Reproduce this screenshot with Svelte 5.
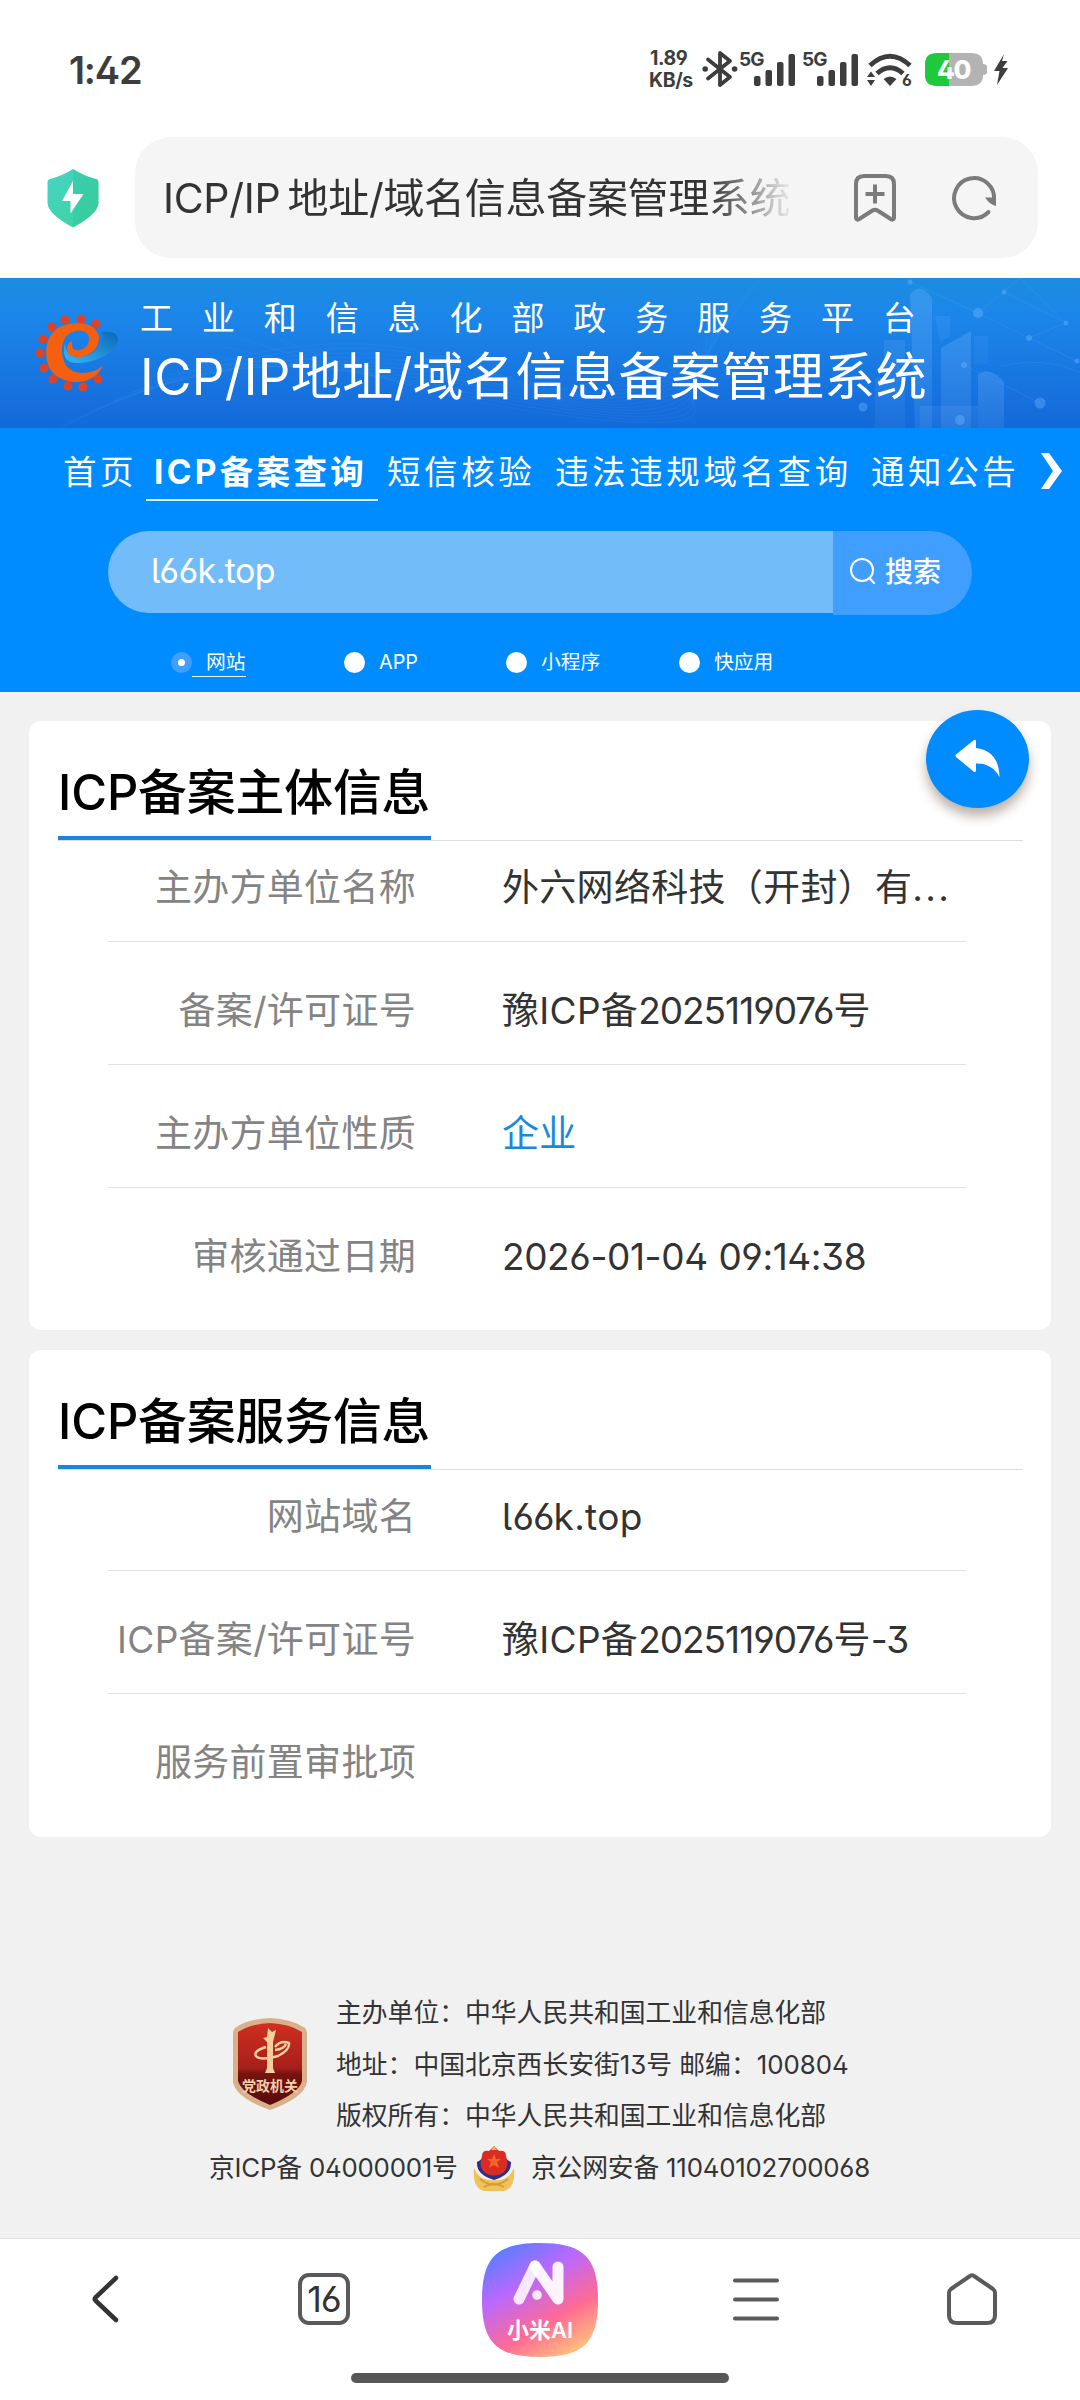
<script>
  const navItems = ['首页', 'ICP备案查询', '短信核验', '违法违规域名查询', '通知公告'];
  const activeNav = 1;

  const types = ['网站', 'APP', '小程序', '快应用'];
  const activeType = 0;

  const cards = [
    {
      title: 'ICP备案主体信息',
      rows: [
        { label: '主办方单位名称', value: '外六网络科技（开封）有...' },
        { label: '备案/许可证号', value: '豫ICP备2025119076号' },
        { label: '主办方单位性质', value: '企业', link: true },
        { label: '审核通过日期', value: '2026-01-04 09:14:38', date: true },
      ],
    },
    {
      title: 'ICP备案服务信息',
      rows: [
        { label: '网站域名', value: 'l66k.top' },
        { label: 'ICP备案/许可证号', value: '豫ICP备2025119076号-3' },
        { label: '服务前置审批项', value: '' },
      ],
    },
  ];

  const signals = [1, 2];
  const teeth = [
    [60, 9], [45, 4], [29, 5], [16, 12], [7, 24], [4, 38],
    [8, 53], [17, 64], [32, 71], [47, 72], [62, 64],
  ];
  const waves = Array.from({ length: 12 }, (_, i) => i * 9);

  // digits are set tighter than letters, so runs are split
  const runs = (text) => text.match(/\.{3}|[\d:-]+|[A-Za-z/.]+|[^\dA-Za-z/.:-]+/g) ?? [];
  const isDigits = (s) => /^[\d:-]+$/.test(s);
</script>

{#snippet mixed(text)}{#each runs(text) as run}<span class:digits={isDigits(run)} class:dots={run === '...'}>{run}</span>{/each}{/snippet}

<div class="screen">
  <div class="status">
    <span class="clock">1:42</span>
    <div class="speed"><span>1.89</span><span>KB/s</span></div>
    <svg class="bt" width="36" height="38" viewBox="0 0 36 38">
      <path d="M6 9.5 L28 27 L18 35 V3 L28 11 L6 28.5" fill="none" stroke="#3d3d3d" stroke-width="3.8" stroke-linejoin="round" stroke-linecap="round" />
      <circle cx="3.2" cy="19" r="2.8" fill="#3d3d3d" /><circle cx="32.6" cy="19" r="2.8" fill="#3d3d3d" />
    </svg>
    {#each signals as s (s)}
      <svg class="signal" width="58" height="38" viewBox="0 0 58 38">
        <text x="-1" y="15.500" class="five-g">5G</text>
        <g fill="#3d3d3d">
          <rect x="14" y="26" width="6.5" height="10" rx="2" />
          <rect x="25.5" y="20" width="6.5" height="16" rx="2" />
          <rect x="37" y="12" width="6.5" height="24" rx="2" />
          <rect x="48.5" y="4" width="6.5" height="32" rx="2" />
        </g>
      </svg>
    {/each}
    <svg class="wifi" width="46" height="38" viewBox="0 0 46 38">
      <g fill="none" stroke="#3d3d3d" stroke-width="5">
        <path d="M3 15.5 Q23 -3 43 15.5" />
        <path d="M10 23.5 Q23 12 36 23.5" />
      </g>
      <path d="M16.5 29 Q23 24 29.5 29 L23 36 Z" fill="#3d3d3d" />
      <path d="M0 27 L4 21.5 L8 27 Z M0 30 L4 36 L8 30 Z" fill="#3d3d3d" />
      <text x="35" y="36" class="six">6</text>
    </svg>
    <svg class="battery" width="62" height="34" viewBox="0 0 62 34">
      <path d="M12 0 H24 V33 H12 Q0 33 0 22 V11 Q0 0 12 0 Z" fill="#1fc93c" />
      <path d="M24 0 H46 Q58 0 58 11 V22 Q58 33 46 33 H24 Z" fill="#b3b3b3" />
      <path d="M58 11 Q62 11 62 14 V19 Q62 22 58 22 Z" fill="#b3b3b3" />
      <text x="28.5" y="26" text-anchor="middle" class="level">40</text>
    </svg>
    <svg class="bolt" width="16" height="32" viewBox="0 0 16 32">
      <path d="M11 0 L1 17 H6.5 L4 31 L15 14 H9.5 L14.5 7 H9 Z" fill="#3d3d3d" />
    </svg>
  </div>

  <div class="address">
    <svg class="shield" width="52" height="59" viewBox="0 0 52 59">
      <defs>
        <linearGradient id="mint" x1="0" y1="0" x2="1" y2="1">
          <stop offset="0" stop-color="#48d2c6" /><stop offset="1" stop-color="#3bd59a" />
        </linearGradient>
      </defs>
      <path d="M26 0 Q37 7 49 10 Q51.500 10.500 51.500 13 V34 Q51 45 26 58.500 Q1 45 .5 34 V13 Q.5 10.500 3 10 Q15 7 26 0 Z" fill="url(#mint)" />
      <path d="M26 0 Q37 7 49 10 Q51.500 10.500 51.500 13 V34 Q51 45 26 58.500 Z" fill="#20b890" opacity=".22" />
      <path d="M26 12 L15 32 H23.500 V44.500 L36.500 25 H26 Z" fill="#fff" />
    </svg>
    <div class="url-box">
      <div class="url-text">ICP/IP 地址/域名信息备案管理系统</div>
      <svg class="bookmark" width="42" height="48" viewBox="0 0 42 48" fill="none" stroke="#7b7b7b" stroke-width="4">
        <path d="M2 10 Q2 2 10 2 H32 Q40 2 40 10 V44 Q39 47 36 44.500 L23.500 36.500 Q21 35 18.500 36.500 L6 44.500 Q3 47 2 44 Z" stroke-linejoin="round" />
        <path d="M21 10.500 V29.500 M11.500 20 H30.500" />
      </svg>
      <svg class="reload" width="46" height="46" viewBox="0 0 46 46">
        <path d="M36.500 37 A20 20 0 1 1 42 25" fill="none" stroke="#7b7b7b" stroke-width="4" stroke-linecap="round" />
        <path d="M33 22.500 H44 V31 Q38 30 33 22.500 Z" fill="#7b7b7b" />
      </svg>
    </div>
  </div>

  <header class="banner">
    <svg class="scene" width="1080" height="150" viewBox="0 0 1080 150">
      <defs>
        <linearGradient id="tower" x1="0" y1="0" x2="0" y2="1">
          <stop offset="0" stop-color="#8fc8ff" stop-opacity=".22" /><stop offset="1" stop-color="#8fc8ff" stop-opacity=".12" />
        </linearGradient>
      </defs>
      <g fill="none" stroke="#5db4ff" stroke-opacity=".1">
        {#each waves as w (w)}
          <path d="M{60 + w * 2} {150 - w} Q{300 + w} {20 + w} {480 + w} {90 + w / 2} T{760 - w} {w}" />
        {/each}
      </g>
      <g fill="url(#tower)">
        <path d="M910 16 Q921 4 932 20 V150 H915 Z" />
        <path d="M941 70 L971 53 V150 H941 Z" />
        <path d="M978 96 Q990 88 1004 104 V150 H978 Z" />
        <path d="M884 62 H905 V150 H875 V100 H884 Z" opacity=".6" />
        <path d="M935 38 H950 V58 L940 64 Z M974 58 H988 V86 H974 Z" opacity=".5" />
        <path d="M920 128 H978 V150 H920 Z" opacity=".5" />
      </g>
      <g fill="#7fc4ff" fill-opacity=".32">
        <circle cx="978" cy="35" r="5" /><circle cx="1040" cy="125" r="5.500" /><circle cx="863" cy="129" r="4.500" />
        <circle cx="1029" cy="60" r="3" /><circle cx="1066" cy="45" r="2.500" /><circle cx="1004" cy="14" r="2.500" />
        <circle cx="910" cy="4" r="2.500" /><circle cx="964" cy="87" r="3" /><circle cx="960" cy="142" r="5" /><circle cx="1077" cy="83" r="2.500" />
      </g>
      <g fill="none" stroke="#7fc4ff" stroke-opacity=".13">
        <path d="M910 4 L978 35 L1029 60 L1066 45 L1020 0 L978 35 M1029 60 L1077 83 M964 87 L1040 125 M1004 14 L1066 45" />
        <path d="M1000 88 Q1045 78 1080 94" />
      </g>
    </svg>
    <svg class="logo" width="84" height="78" viewBox="0 0 84 78">
      <defs>
        <linearGradient id="swoosh" x1="0" y1="1" x2="1" y2="0">
          <stop offset="0" stop-color="#38b6f5" /><stop offset="1" stop-color="#0b66b8" />
        </linearGradient>
      </defs>
      {#each teeth as [x, y]}
        <circle cx={x} cy={y} r="4.500" fill="#dd4326" />
      {/each}
      <path d="M65 17 Q81 15 82 24 Q81 36 62 44 Q46 50 34 47 Q25 42 29 28 Q30 41 42 42 Q60 41 66 26 Q68 20 65 17 Z" fill="url(#swoosh)" />
      <path d="M67 51 Q58 68 38 67 Q10 64 10 37 Q11 10 40 8 Q60 8 63 22 Q63 38 45 42 Q32 43 31 34 Q31 28 36 26 Q35 37 44 35 Q54 32 53 22 Q50 14 39 16 Q25 20 26 38 Q28 57 46 58 Q58 58 67 51 Z" fill="#f4600f" />
    </svg>
    <div class="titles">
      <div class="org">工业和信息化部政务服务平台</div>
      <div class="system">ICP/IP地址/域名信息备案管理系统</div>
    </div>
  </header>

  <section class="search-area">
    <nav>
      {#each navItems as item, i (item)}
        <div class="nav-item" class:active={i === activeNav}><span>{item}</span></div>
      {/each}
      <svg class="more" width="22" height="36" viewBox="0 0 22 36">
        <path d="M0 0 H8 L21 18 L8 36 H0 L12 18 Z" fill="#fff" />
      </svg>
    </nav>
    <div class="search">
      <div class="field">l66k.top</div>
      <div class="go">
        <svg width="28" height="28" viewBox="0 0 28 28" fill="none" stroke="#fff" stroke-width="2">
          <circle cx="13" cy="13" r="11" /><path d="M20.500 21 L25 26" stroke-linecap="round" />
        </svg>
        <span>搜索</span>
      </div>
    </div>
    <div class="types">
      {#each types as type, i (type)}
        <div class="type" class:on={i === activeType}><i></i><span>{type}</span></div>
      {/each}
    </div>
  </section>

  <main>
    <div class="back">
      <svg width="46" height="40" viewBox="0 0 46 40">
        <path d="M19 1 Q21 0 21 3 V9 Q44 12 44.500 38 Q37 24 21 24.500 V31 Q21 34 18.500 32.500 L1 18 Q0 16.500 1 15.500 Z" fill="#fff" />
      </svg>
    </div>
    {#each cards as card (card.title)}
      <section class="card">
        <div class="head"><h2>{card.title}</h2></div>
        <div class="rows">
          {#each card.rows as row (row.label)}
            <div class="row">
              <span class="label">{row.label}</span>
              <span class="value" class:link={row.link} class:date={row.date}>{@render mixed(row.value)}</span>
            </div>
          {/each}
        </div>
      </section>
    {/each}
  </main>

  <footer>
    <div class="owner">
      <svg class="party" width="76" height="92" viewBox="0 0 76 92">
        <defs>
          <linearGradient id="crest" x1="0" y1="0" x2="0" y2="1">
            <stop offset="0" stop-color="#d02f20" /><stop offset=".55" stop-color="#a51f1a" /><stop offset=".62" stop-color="#76130f" /><stop offset="1" stop-color="#560b0b" />
          </linearGradient>
        </defs>
        <path d="M38 0 Q60 1 73 10 Q75 12 75 15 V64 Q72 80 38 92 Q4 80 1 64 V15 Q1 12 3 10 Q16 1 38 0 Z" fill="#d9b08a" />
        <path d="M38 5 Q58 6 70 14 V63 Q67 75 38 87 Q9 75 6 63 V14 Q18 6 38 5 Z" fill="url(#crest)" />
        <path d="M36 10 L40 14 L44 12 L42 20 L41 24 V50 L43 55 H33 L35 50 V24 L31 20 L35 19 Z" fill="#f3cf9c" />
        <path d="M34 29 Q21 33 24 38 Q28 43 46 38 Q58 32 57 25 Q49 22 43 29 M43 32 Q52 31 54 26" fill="none" stroke="#f3cf9c" stroke-width="2.500" />
        <text x="38" y="73" text-anchor="middle" class="party-text">党政机关</text>
      </svg>
      <div class="lines">
        <div>主办单位：中华人民共和国工业和信息化部</div>
        <div>地址：中国北京西长安街13号 邮编：100804</div>
        <div>版权所有：中华人民共和国工业和信息化部</div>
      </div>
    </div>
    <div class="records">
      <span class="icp">京ICP备 04000001号</span>
      <svg width="44" height="46" viewBox="0 0 44 46">
        <path d="M2 22 Q0 42 12 45 H32 Q44 42 42 22 Q36 36 22 34 Q8 36 2 22 Z" fill="#f0c25c" />
        <path d="M8 33 Q22 44 36 33 M12 41 Q22 35 32 41" fill="none" stroke="#d99a35" stroke-width="2" />
        <path d="M5 16 Q10 14 13 8 H31 Q34 14 39 16 Q40 29 22 34 Q4 29 5 16 Z" fill="#2d2f86" />
        <path d="M22 0 L27 5 Q34 4 34 10 Q38 21 31 27 Q22 32 13 27 Q6 21 10 10 Q10 4 17 5 Z" fill="#d92c22" />
        <path d="M22 8 L24 13 H29 L25 16 L27 22 L22 19 L17 22 L19 16 L15 13 H20 Z" fill="#f4652c" />
        <path d="M19 4 L22 0 L25 4 Z" fill="#f0b04c" />
      </svg>
      <span class="police">京公网安备 11040102700068</span>
    </div>
  </footer>

  <div class="toolbar">
    <svg width="52" height="52" viewBox="0 0 52 52" fill="none" stroke="#333" stroke-width="4.500" stroke-linecap="round" stroke-linejoin="round">
      <path d="M34 5 L13.500 24.500 Q12 26 13.500 27.500 L34 47" />
    </svg>
    <div class="tabs">16</div>
    <svg class="ai" width="118" height="116" viewBox="0 0 118 116">
      <defs>
        <linearGradient id="glow" x1=".15" y1="0" x2=".75" y2="1">
          <stop offset="0" stop-color="#4f80ff" /><stop offset=".35" stop-color="#b869ff" /><stop offset=".7" stop-color="#ff6a94" /><stop offset="1" stop-color="#ffc37c" />
        </linearGradient>
      </defs>
      <path d="M59 1 C103 1 117 16 117 58 C117 100 103 115 59 115 C15 115 1 100 1 58 C1 16 15 1 59 1 Z" fill="url(#glow)" />
      <g fill="none" stroke="#fff" stroke-width="11" stroke-linecap="round" stroke-linejoin="round">
        <path d="M38 57 L54 24" stroke-opacity=".85" />
        <path d="M54 24 L77 57 V25" stroke-opacity=".93" />
      </g>
      <circle cx="56" cy="53" r="4.800" fill="#fff" opacity=".85" />
      <text x="59" y="96" text-anchor="middle" class="ai-text">小米AI</text>
    </svg>
    <svg width="52" height="52" viewBox="0 0 52 52" fill="none" stroke="#5a5a5a" stroke-width="4" stroke-linecap="round">
      <path d="M5 7.500 H47 M5 26.500 H47 M5 45.500 H47" />
    </svg>
    <svg width="52" height="54" viewBox="0 0 52 54" fill="none" stroke="#5a5a5a" stroke-width="4" stroke-linejoin="round">
      <path d="M24 4 Q26 2.500 28 4 L47 17 Q49 18.500 49 21 V43 Q49 51 41 51 H11 Q3 51 3 43 V21 Q3 18.500 5 17 Z" />
    </svg>
  </div>
  <div class="gesture"><div class="pill"></div></div>
</div>

<style>
  :global(body) {
    background: #f1f1f1;
  }

  .screen {
    display: flex;
    flex-direction: column;
    width: 1080px;
    height: 2400px;
    overflow: hidden;
    background: #f1f1f1;
    color: #333;
    font-family: Inter, "Noto Sans CJK SC", sans-serif;
    font-feature-settings: "ss01", "cv05";
    white-space: nowrap;
  }

  .screen svg {
    display: block;
    flex: none;
    overflow: visible;
  }

  /* status bar */
  .status {
    display: flex;
    align-items: flex-start;
    box-sizing: border-box;
    height: 137px;
    padding: 50px 0 0 69px;
    background: #fff;
    color: #3d3d3d;
  }

  .clock {
    width: 580px;
    font-size: 38px;
    line-height: 41px;
    font-weight: 600;
    letter-spacing: -1.200px;
  }

  .speed {
    display: flex;
    flex-direction: column;
    width: 53px;
    font-size: 19.500px;
    font-weight: 700;
    line-height: 22px;
    margin-top: -3px;
    letter-spacing: -0.4px;
  }

  .speed span:first-child {
    padding-left: 1px;
  }

  .signal {
    margin-left: 2px;
  }

  .signal + .signal {
    margin-left: 5px;
  }

  .five-g {
    font-size: 19px;
    font-weight: 700;
    fill: #3d3d3d;
    letter-spacing: -0.8px;
  }

  .six {
    font-size: 16px;
    font-weight: 700;
    fill: #3d3d3d;
  }

  .wifi {
    margin-left: 6px;
  }

  .battery {
    margin: 3px 0 0 12px;
  }

  .level {
    font-size: 26px;
    font-weight: 800;
    letter-spacing: -1.500px;
    fill: #fff;
  }

  .bolt {
    margin: 4px 0 0 6px;
  }

  /* address bar */
  .address {
    display: flex;
    height: 141px;
    background: #fff;
  }

  .shield {
    margin: 32px 36px 0 47px;
  }

  .url-box {
    display: flex;
    align-items: center;
    box-sizing: border-box;
    width: 903px;
    height: 121px;
    padding-left: 28px;
    border-radius: 36px;
    background: #f5f5f5;
  }

  .url-text {
    width: 628px;
    overflow: hidden;
    font-size: 41px;
    line-height: 60px;
    letter-spacing: -0.300px;
    word-spacing: -4px;
    -webkit-mask-image: linear-gradient(90deg, #000 545px, transparent 632px);
    mask-image: linear-gradient(90deg, #000 545px, transparent 632px);
  }

  .bookmark {
    margin-left: 63px;
  }

  .reload {
    margin-left: 56px;
  }

  /* banner */
  .banner {
    position: relative;
    display: flex;
    height: 150px;
    background: linear-gradient(#1c8ce0, #1b86ea 25%, #1469d9);
    color: #fff;
  }

  .scene {
    position: absolute;
    inset: 0;
  }

  .logo {
    position: relative;
    margin: 37px 0 0 36px;
  }

  .titles {
    position: relative;
    margin-left: 20px;
    padding-top: 18px;
  }

  .org {
    font-size: 33px;
    line-height: 44px;
    letter-spacing: 28.900px;
  }

  .system {
    font-size: 51px;
    line-height: 73px;
    letter-spacing: 0.450px;
  }

  /* query area */
  .search-area {
    height: 264px;
    background: #008cff;
    color: #fff;
  }

  nav {
    display: grid;
    grid-template-columns: 83px 241px 168px 316px 170px 1fr;
    padding-left: 63px;
    height: 103px;
    align-items: start;
  }

  .nav-item {
    box-sizing: border-box;
    height: 73px;
    padding-top: 23px;
    font-size: 33.500px;
    line-height: 42px;
    letter-spacing: 3.600px;
  }

  .nav-item.active {
    width: 232px;
    padding-left: 8px;
    border-bottom: 2px solid #d5f7ff;
    font-weight: 700;
    letter-spacing: 3.300px;
  }

  .more {
    margin-top: 25px;
  }

  .search {
    display: flex;
    width: 864px;
    height: 84px;
    margin-left: 108px;
  }

  .field {
    box-sizing: border-box;
    width: 725px;
    height: 82px;
    padding-left: 43px;
    border-radius: 41px 0 0 41px;
    background: #73bcfa;
    font-size: 34px;
    line-height: 79px;
    letter-spacing: -0.6px;
  }

  .go {
    display: flex;
    align-items: center;
    box-sizing: border-box;
    width: 139px;
    padding-left: 16px;
    gap: 8px;
    border-radius: 0 42px 42px 0;
    background: #409eff;
    font-size: 28px;
    font-weight: 500;
  }

  .go svg {
    margin-top: -4px;
  }

  .go span {
    margin-top: -3px;
    line-height: 40px;
  }

  .types {
    display: grid;
    grid-template-columns: 173px 162px 173px 1fr;
    padding: 33px 0 0 171px;
    font-size: 19.800px;
    line-height: 27px;
  }

  .type {
    display: flex;
    align-items: center;
  }

  .type i {
    box-sizing: border-box;
    width: 21px;
    height: 21px;
    border-radius: 50%;
    background: #fff;
  }

  .type span {
    padding-left: 14px;
  }

  .type.on i {
    border: 7px solid #409eff;
  }

  .type.on span {
    margin-top: 1px;
    border-bottom: 1px solid #e4f6ff;
  }

  /* cards */
  main {
    position: relative;
    height: 1145px;
    padding: 29px 29px 0;
  }

  .back {
    position: absolute;
    left: 926px;
    top: 18px;
    display: flex;
    align-items: center;
    justify-content: center;
    width: 103px;
    height: 98px;
    border-radius: 50%;
    background: #008cff;
    box-shadow: 0 8px 12px rgba(60, 30, 10, 0.35);
  }

  .card {
    margin-bottom: 20px;
    border-radius: 12px;
    background: #fff;
    padding: 0 28px 0 29px;
    overflow: hidden;
  }

  .card:nth-of-type(1) {
    height: 609px;
  }

  .card:nth-of-type(2) {
    height: 487px;
  }

  .head {
    height: 119px;
    border-bottom: 1px solid #ddd;
  }

  h2 {
    box-sizing: border-box;
    width: 373px;
    height: 119px;
    margin: 0;
    padding-top: 38px;
    border-bottom: 4px solid #1986dc;
    color: #000;
    font-size: 48.800px;
    line-height: 68px;
    font-weight: 500;
    letter-spacing: -0.1px;
  }

  .rows {
    padding: 0 57px 0 50px;
    font-size: 37px;
    line-height: 50px;
    letter-spacing: 0.3px;
  }

  .row {
    display: flex;
    box-sizing: border-box;
    height: 123px;
    padding-top: 44px;
    border-bottom: 1px solid #e2e2e2;
  }

  .row:first-child {
    height: 101px;
    padding-top: 22px;
  }

  .row:last-child {
    border-bottom: 0;
  }

  .label {
    width: 308px;
    margin-right: 86px;
    text-align: right;
    color: #848484;
  }

  .value {
    color: #333;
  }

  .value .digits {
    letter-spacing: -1px;
  }

  .value .dots {
    letter-spacing: 2.300px;
  }

  .value.date .digits {
    letter-spacing: -0.400px;
  }

  .value.link {
    color: #1989e0;
  }

  /* footer */
  footer {
    flex: 1;
    padding-top: 121px;
    font-size: 25.800px;
    line-height: 51.600px;
  }

  .owner {
    display: flex;
    padding-left: 232px;
  }

  .party {
    margin: 31px 28px 0 0;
  }

  .party-text {
    font-size: 14px;
    font-weight: 700;
    fill: #f3cfa8;
  }

  .records {
    display: flex;
    align-items: center;
    padding-left: 209px;
    letter-spacing: -0.200px;
  }

  .records svg {
    margin: 3px 0 0;
  }

  .icp {
    width: 263px;
  }

  .police {
    margin-left: 15px;
  }

  /* browser toolbar */
  .toolbar {
    display: grid;
    grid-template-columns: repeat(5, 216px);
    place-items: center;
    box-sizing: border-box;
    height: 121px;
    padding-bottom: 3px;
    border-top: 1px solid #e2e2e2;
    background: #fff;
  }

  .ai {
    margin-top: 3px;
  }

  .tabs {
    box-sizing: border-box;
    width: 52px;
    height: 52px;
    border: 4px solid #5a5a5a;
    border-radius: 11px;
    text-align: center;
    font-size: 36px;
    line-height: 44px;
    letter-spacing: -1px;
  }

  .ai-text {
    font-size: 22px;
    font-weight: 600;
    fill: #fff;
  }

  .gesture {
    box-sizing: border-box;
    height: 41px;
    padding-top: 14px;
    background: #fff;
  }

  .pill {
    width: 378px;
    height: 10px;
    margin: 0 auto;
    border-radius: 5px;
    background: #575757;
  }
</style>
